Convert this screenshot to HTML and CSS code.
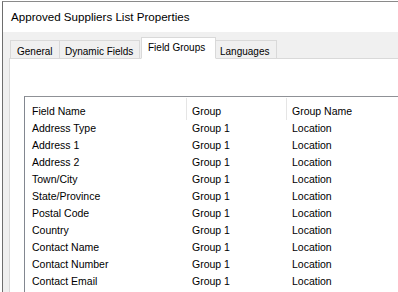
FILE: index.html
```html
<!DOCTYPE html>
<html>
<head>
<meta charset="utf-8">
<link rel="stylesheet" href="styles.css">
</head>
<body>
<div class="window">
  <div class="titlebar">Approved Suppliers List Properties</div>
  <div class="client">
    <div class="tabs">
      <div class="tab t-general">General</div>
      <div class="tab t-dynamic">Dynamic Fields</div>
      <div class="tab selected t-groups">Field Groups</div>
      <div class="tab t-lang">Languages</div>
    </div>
    <div class="panel">
      <div class="list">
        <div class="row head">
          <div class="cell c1">Field Name</div>
          <div class="cell c2">Group</div>
          <div class="cell c3">Group Name</div>
        </div>
        <div class="row"><div class="cell c1">Address Type</div><div class="cell c2">Group 1</div><div class="cell c3">Location</div></div>
        <div class="row"><div class="cell c1">Address 1</div><div class="cell c2">Group 1</div><div class="cell c3">Location</div></div>
        <div class="row"><div class="cell c1">Address 2</div><div class="cell c2">Group 1</div><div class="cell c3">Location</div></div>
        <div class="row"><div class="cell c1">Town/City</div><div class="cell c2">Group 1</div><div class="cell c3">Location</div></div>
        <div class="row"><div class="cell c1">State/Province</div><div class="cell c2">Group 1</div><div class="cell c3">Location</div></div>
        <div class="row"><div class="cell c1">Postal Code</div><div class="cell c2">Group 1</div><div class="cell c3">Location</div></div>
        <div class="row"><div class="cell c1">Country</div><div class="cell c2">Group 1</div><div class="cell c3">Location</div></div>
        <div class="row"><div class="cell c1">Contact Name</div><div class="cell c2">Group 1</div><div class="cell c3">Location</div></div>
        <div class="row"><div class="cell c1">Contact Number</div><div class="cell c2">Group 1</div><div class="cell c3">Location</div></div>
        <div class="row"><div class="cell c1">Contact Email</div><div class="cell c2">Group 1</div><div class="cell c3">Location</div></div>
      </div>
    </div>
  </div>
</div>
</body>
</html>
```

FILE: styles.css
```css
html, body {
  margin: 0;
  padding: 0;
  width: 398px;
  height: 292px;
  overflow: hidden;
  background: #ffffff;
  font-family: "Liberation Sans", Arial, sans-serif;
  color: #000;
}

.window {
  margin: 1px 0 0 2px;
  height: 291px;
  border-top: 1px solid #8a8a8a;
  border-left: 1px solid #6e6e6e;
  background: #f0f0f0;
  box-sizing: border-box;
  display: flex;
  flex-direction: column;
}

.titlebar {
  height: 30px;
  box-sizing: border-box;
  padding: 8px 0 0 8px;
  font-size: 11.6px;
  line-height: 14px;
  background: #ffffff;
  white-space: nowrap;
}

.client {
  flex: 1;
  display: flex;
  flex-direction: column;
  padding-left: 6px;
  min-height: 0;
}

.tabs {
  height: 27px;
  display: flex;
  align-items: flex-end;
  margin-left: 1px;
  margin-bottom: -1px;
  position: relative;
  z-index: 1;
}

.tab {
  box-sizing: border-box;
  height: 19px;
  border-top: 1px solid #d9d9d9;
  border-bottom: 1px solid #d9d9d9;
  font-size: 10px;
  line-height: 15px;
  padding-top: 3px;
  white-space: nowrap;
  background: #f0f0f0;
}

.t-general {
  width: 50px;
  border-left: 1px solid #d9d9d9;
  border-right: 1px solid #d9d9d9;
  padding-left: 6px;
}

.t-dynamic {
  width: 80px;
  border-right: 1px solid #d9d9d9;
  padding-left: 5px;
}

.tab.selected {
  width: 75px;
  height: 22px;
  padding-top: 2px;
  padding-left: 6px;
  background: #ffffff;
  border-left: 1px solid #d9d9d9;
  border-right: 1px solid #d9d9d9;
  border-bottom: 1px solid #ffffff;
  margin-left: 1px;
}

.t-lang {
  width: 61px;
  border-right: 1px solid #d9d9d9;
  padding-left: 4px;
}

.panel {
  flex: 1;
  background: #ffffff;
  border-top: 1px solid #d9d9d9;
  border-left: 1px solid #d9d9d9;
  padding: 37px 0 0 14px;
  min-height: 0;
  overflow: hidden;
}

.list {
  border-top: 1px solid #8f9196;
  border-left: 1px solid #828790;
  height: 300px;
  background: #fff;
  font-size: 10.5px;
}

.row {
  display: grid;
  grid-template-columns: 162px 100px 1fr;
  height: 17px;
  line-height: 17px;
  white-space: nowrap;
}

.row.head {
  height: 23px;
}

.cell.c1 { padding-left: 7px; }
.cell.c2 { padding-left: 5px; }
.cell.c3 { padding-left: 5px; }

.head .cell {
  padding-top: 6px;
  box-sizing: border-box;
  height: 23px;
  line-height: 17px;
}

.head .c1, .head .c2 {
  border-right: 1px solid #e5e5e5;
  margin-top: 1px;
  padding-top: 5px;
  height: 22px;
}
```
